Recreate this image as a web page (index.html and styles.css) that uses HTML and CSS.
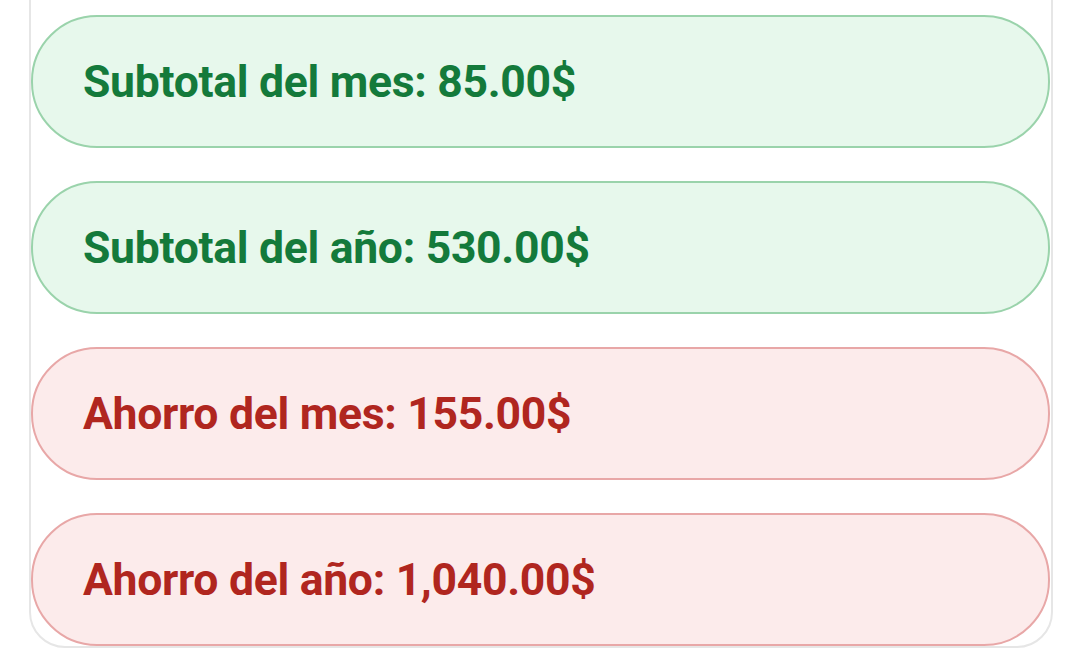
FILE: index.html
```html
<!DOCTYPE html>
<html lang="es">
<head>
<meta charset="utf-8">
<link rel="stylesheet" href="styles.css">
</head>
<body>
<div class="card">
  <div class="pill pill-green"><span class="label">Subtotal del mes: 85.00$</span></div>
  <div class="pill pill-green"><span class="label">Subtotal del año: 530.00$</span></div>
  <div class="pill pill-red"><span class="label">Ahorro del mes: 155.00$</span></div>
  <div class="pill pill-red"><span class="label">Ahorro del año: 1,040.00$</span></div>
</div>
</body>
</html>
```
FILE: styles.css
```css
html, body {
  margin: 0;
  padding: 0;
  background: #ffffff;
  width: 1080px;
  height: 666px;
  overflow: hidden;
  font-family: Roboto, "Liberation Sans", sans-serif;
}

.card {
  margin: -40px 27px 0 29px;
  padding: 53px 1px 0 0;
  border: 2px solid #e6e6e6;
  border-radius: 0 0 36px 36px;
  display: flex;
  flex-direction: column;
  gap: 33px;
}

.pill {
  height: 129px;
  border-radius: 66px;
  border: 2px solid;
  display: flex;
  align-items: center;
  padding-left: 50px;
}

.label {
  font-size: 44.5px;
  font-weight: 700;
  letter-spacing: -0.3px;
}

.pill-green {
  background: #e7f8ec;
  border-color: #9ad3ab;
  color: #147a3b;
}

.pill-red {
  background: #fcebeb;
  border-color: #e8a7a7;
  color: #b0261f;
}
```
